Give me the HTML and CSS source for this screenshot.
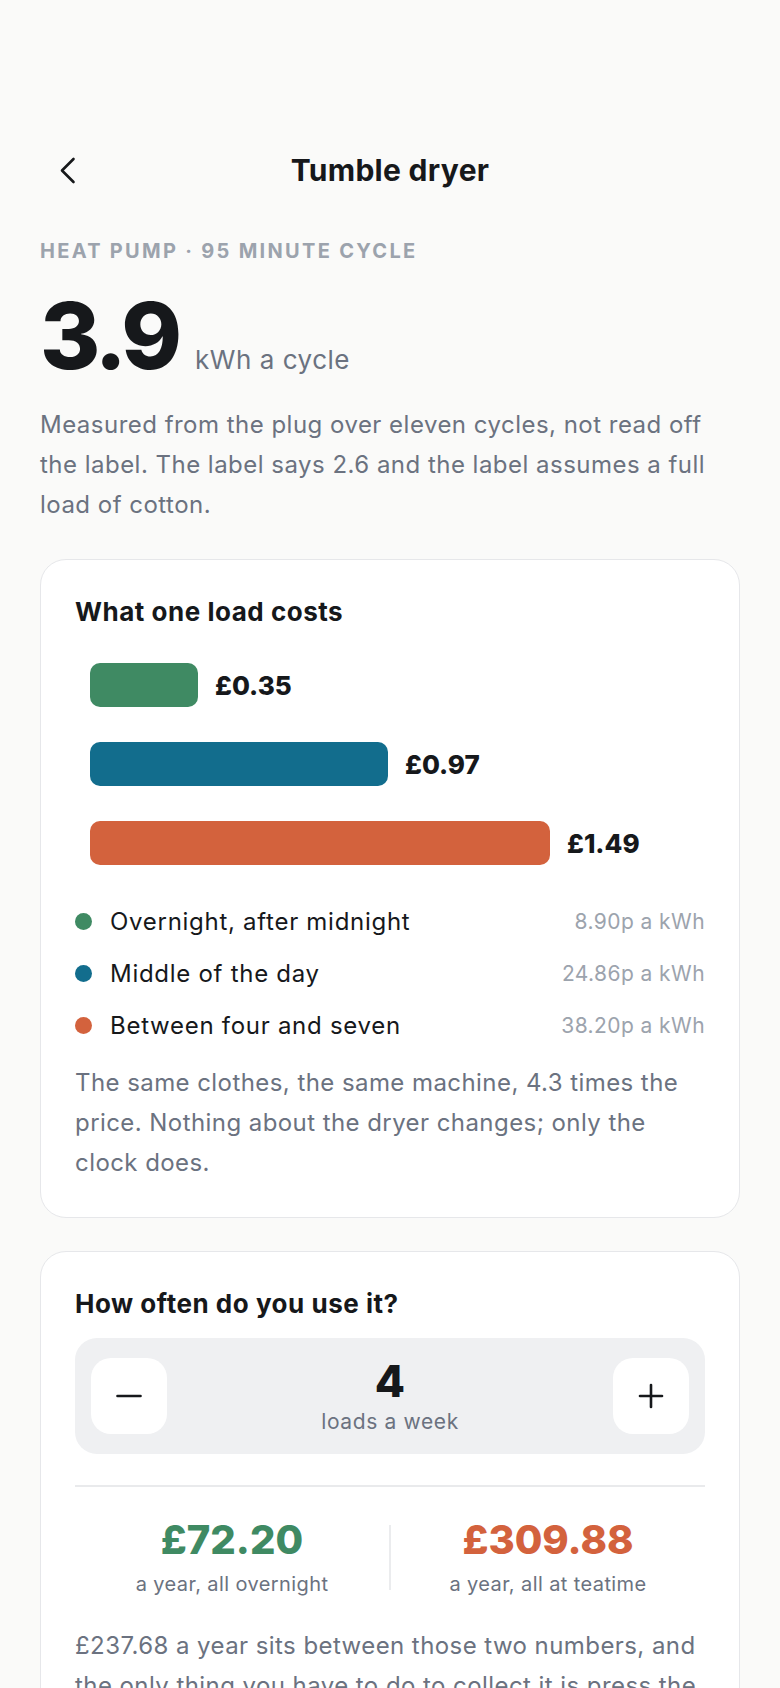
FILE: index.html
```html
<!DOCTYPE html>
<html lang="en">
<head>
<meta charset="utf-8">
<meta name="viewport" content="width=device-width, initial-scale=1">
<title>Tumble dryer</title>
<link rel="stylesheet" href="styles.css">
</head>
<body>
<main class="page">
  <header class="topbar">
    <button class="back" aria-label="Back">
      <svg class="back-icon" width="20" height="30" viewBox="0 0 20 30" aria-hidden="true"><polyline points="15.5,4 4,15.5 15.5,27" fill="none" stroke="#16181b" stroke-width="2.6" stroke-linecap="round" stroke-linejoin="round"/></svg>
    </button>
    <h1 class="title">Tumble dryer</h1>
    <span class="spacer"></span>
  </header>

  <p class="eyebrow">Heat pump · 95 minute cycle</p>
  <div class="headline">
    <span class="big">3.9</span>
    <span class="unit">kWh a cycle</span>
  </div>
  <p class="lead">Measured from the plug over eleven cycles, not read off the label. The label says 2.6 and the label assumes a full load of cotton.</p>

  <section class="card">
    <h2 class="card-title">What one load costs</h2>
    <div class="bars">
      <div class="bar-row"><span class="bar green" style="width:108px"></span><span class="bar-label">£0.35</span></div>
      <div class="bar-row"><span class="bar blue" style="width:298px"></span><span class="bar-label">£0.97</span></div>
      <div class="bar-row"><span class="bar orange" style="width:460px"></span><span class="bar-label">£1.49</span></div>
    </div>
    <ul class="legend">
      <li class="legend-row"><span class="dot green"></span><span class="legend-name">Overnight, after midnight</span><span class="legend-rate">8.90p a kWh</span></li>
      <li class="legend-row"><span class="dot blue"></span><span class="legend-name">Middle of the day</span><span class="legend-rate">24.86p a kWh</span></li>
      <li class="legend-row"><span class="dot orange"></span><span class="legend-name">Between four and seven</span><span class="legend-rate">38.20p a kWh</span></li>
    </ul>
    <p class="note">The same clothes, the same machine, 4.3 times the price. Nothing about the dryer changes; only the clock does.</p>
  </section>

  <section class="card">
    <h2 class="card-title">How often do you use it?</h2>
    <div class="stepper">
      <button class="step-btn" aria-label="Fewer loads">
        <svg width="26" height="26" viewBox="0 0 26 26" aria-hidden="true"><line x1="1.5" y1="13" x2="24.5" y2="13" stroke="#16181b" stroke-width="2.6" stroke-linecap="round"/></svg>
      </button>
      <div class="step-value">
        <span class="step-num">4</span>
        <span class="step-unit">loads a week</span>
      </div>
      <button class="step-btn" aria-label="More loads">
        <svg width="26" height="26" viewBox="0 0 26 26" aria-hidden="true"><line x1="2" y1="13" x2="24" y2="13" stroke="#16181b" stroke-width="2.6" stroke-linecap="round"/><line x1="13" y1="2" x2="13" y2="24" stroke="#16181b" stroke-width="2.6" stroke-linecap="round"/></svg>
      </button>
    </div>
    <hr class="rule">
    <div class="stats">
      <div class="stat">
        <span class="stat-num green-text">£72.20</span>
        <span class="stat-label">a year, all overnight</span>
      </div>
      <span class="stat-sep"></span>
      <div class="stat">
        <span class="stat-num orange-text">£309.88</span>
        <span class="stat-label">a year, all at teatime</span>
      </div>
    </div>
    <p class="note">£237.68 a year sits between those two numbers, and the only thing you have to do to collect it is press the delay button before you go to bed.</p>
  </section>
</main>
</body>
</html>
```
FILE: styles.css
```css
* { box-sizing: border-box; }

html, body {
  margin: 0;
  padding: 0;
  background: #fafaf9;
}

body {
  font-family: "Inter", "Noto Sans", "Liberation Sans", sans-serif;
  color: #16181b;
}

.page {
  padding: 140px 40px 40px;
}

.topbar {
  display: grid;
  grid-template-columns: 60px 1fr 60px;
  align-items: center;
  height: 60px;
}

.back {
  display: flex;
  align-items: center;
  justify-content: flex-start;
  padding: 0 0 0 18px;
  margin: 0;
  border: 0;
  background: none;
  height: 60px;
}

.back-icon { display: block; }

.title {
  margin: 0;
  text-align: center;
  font-size: 30px;
  font-weight: 700;
  letter-spacing: 0.01em;
  line-height: 40px;
}

.eyebrow {
  margin: 39px 0 0;
  font-size: 20px;
  line-height: 24px;
  font-weight: 700;
  letter-spacing: 0.115em;
  text-transform: uppercase;
  color: #9ca3ad;
}

.headline {
  display: flex;
  align-items: baseline;
  gap: 17px;
  margin-top: 33px;
}

.big {
  font-size: 92px;
  line-height: 80px;
  font-weight: 800;
  letter-spacing: -0.045em;
  color: #16181b;
}

.unit {
  font-size: 26px;
  line-height: 32px;
  letter-spacing: 0.02em;
  color: #6b7280;
}

.lead {
  margin: 29px 0 0;
  font-size: 24px;
  line-height: 40px;
  letter-spacing: 0.02em;
  color: #6b7280;
}

.card {
  margin-top: 34px;
  background: #ffffff;
  border: 1px solid #e6e7ea;
  border-radius: 26px;
  padding: 34px;
}

.card + .card { margin-top: 33px; }

.card-title {
  margin: 0;
  font-size: 26px;
  line-height: 36px;
  font-weight: 700;
  letter-spacing: 0.02em;
}

.bars {
  display: flex;
  flex-direction: column;
  gap: 35px;
  margin-top: 33px;
  padding-left: 15px;
}

.bar-row {
  display: flex;
  align-items: center;
  gap: 17px;
  height: 44px;
}

.bar {
  display: block;
  height: 44px;
  border-radius: 10px;
}

.green { background: #3f8a63; }
.blue { background: #126d8d; }
.orange { background: #d3623d; }

.green-text { color: #3f8a63; }
.orange-text { color: #d3623d; }

.bar-label {
  font-size: 26px;
  font-weight: 800;
  letter-spacing: 0;
}

.legend {
  list-style: none;
  margin: 39px 0 0;
  padding: 0;
  display: flex;
  flex-direction: column;
  gap: 18px;
}

.legend-row {
  display: flex;
  align-items: center;
  height: 34px;
}

.dot {
  width: 17px;
  height: 17px;
  border-radius: 50%;
  flex: none;
}

.legend-name {
  margin-left: 18px;
  font-size: 24px;
  letter-spacing: 0.03em;
  color: #16181b;
  flex: 1;
}

.legend-rate {
  font-size: 21px;
  letter-spacing: 0.02em;
  color: #9ca3ad;
}

.note {
  margin: 21px 0 0;
  font-size: 24px;
  line-height: 40px;
  letter-spacing: 0.018em;
  color: #6b7280;
}

.stepper {
  margin-top: 16px;
  background: #eff0f2;
  border-radius: 22px;
  padding: 20px 16px;
  display: flex;
  align-items: center;
  justify-content: space-between;
}

.step-btn {
  width: 76px;
  height: 76px;
  border: 0;
  border-radius: 20px;
  background: #ffffff;
  display: flex;
  align-items: center;
  justify-content: center;
  padding: 0;
}

.step-value {
  display: flex;
  flex-direction: column;
  align-items: center;
}

.step-num {
  font-size: 44px;
  line-height: 46px;
  font-weight: 800;
}

.step-unit {
  margin-top: 6px;
  font-size: 21px;
  line-height: 24px;
  letter-spacing: 0.03em;
  color: #6b7280;
}

.rule {
  margin: 31px 0 0;
  border: 0;
  height: 2px;
  background: #e9eaec;
}

.stats {
  display: grid;
  grid-template-columns: 1fr 2px 1fr;
  align-items: center;
  margin-top: 29px;
}

.stat {
  display: flex;
  flex-direction: column;
  align-items: center;
}

.stat-num {
  font-size: 40px;
  line-height: 48px;
  font-weight: 800;
  letter-spacing: 0;
}

.stat-label {
  margin-top: 5px;
  font-size: 20px;
  line-height: 30px;
  letter-spacing: 0.02em;
  color: #6b7280;
}

.stat-sep {
  width: 2px;
  height: 65px;
  background: #ebecee;
}

.card .stats + .note { margin-top: 27px; }
```
